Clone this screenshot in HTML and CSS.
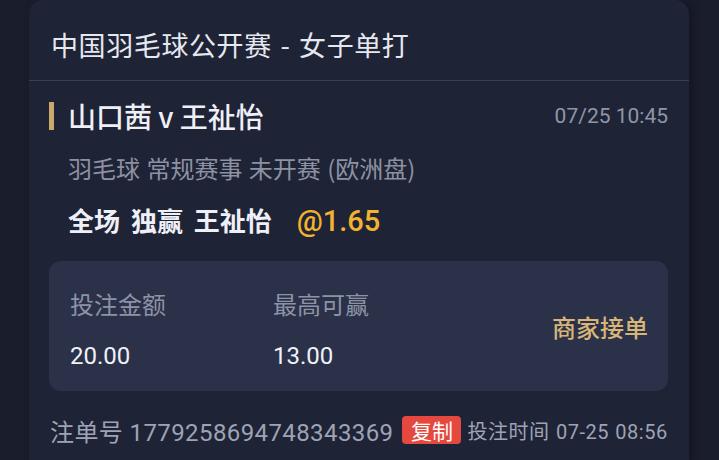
FILE: index.html
```html
<!DOCTYPE html>
<html lang="zh-CN">
<head>
<meta charset="utf-8">
<link rel="stylesheet" href="styles.css">
</head>
<body>
<div class="page">
  <div class="card">
    <div class="card-head">中国羽毛球公开赛 - 女子单打</div>
    <div class="card-body">
      <div class="match-row">
        <div class="match-left">
          <span class="accent"></span>
          <span class="teams">山口茜 v 王祉怡</span>
        </div>
        <span class="time">07/25 10:45</span>
      </div>
      <div class="subtitle">羽毛球 常规赛事 未开赛 (欧洲盘)</div>
      <div class="bet">全场 独赢 王祉怡<span class="odds">@1.65</span></div>
      <div class="stake-box">
        <div class="stake-col">
          <div class="stake-label">投注金额</div>
          <div class="stake-value">20.00</div>
        </div>
        <div class="stake-col">
          <div class="stake-label">最高可赢</div>
          <div class="stake-value">13.00</div>
        </div>
        <div class="merchant">商家接单</div>
      </div>
      <div class="footer">
        <span class="order">注单号 1779258694748343369</span>
        <span class="copy">复制</span>
        <span class="bet-time">投注时间 07-25 08:56</span>
      </div>
    </div>
  </div>
</div>
</body>
</html>
```

FILE: styles.css
```css
* { box-sizing: border-box; }
html, body {
  margin: 0;
  padding: 0;
  background: #1a1d2b;
  width: 719px;
  height: 460px;
  overflow: hidden;
}
body {
  font-family: Roboto, "Noto Sans CJK SC", sans-serif;
}
.page {
  padding-left: 29px;
}
.card {
  width: 660px;
  height: 470px;
  background: #1f2336;
  border-radius: 14px 14px 0 0;
  box-shadow: 4px 0 10px rgba(0, 0, 0, 0.25);
}
.card-head {
  height: 81px;
  padding: 10px 0 0 22px;
  line-height: 70px;
  font-size: 27px;
  color: #e6e8ef;
  letter-spacing: 0.6px;
  word-spacing: 2px;
  border-bottom: 1px solid #3a3f53;
  font-family: "Noto Sans CJK SC", sans-serif;
}
.card-body {
  padding: 0 21px 0 20px;
}
.match-row {
  margin-top: 17px;
  height: 36px;
  display: flex;
  align-items: center;
  justify-content: space-between;
}
.match-left {
  display: flex;
  align-items: center;
}
.accent {
  width: 5px;
  height: 28px;
  background: #c9aa6c;
  margin-right: 14px;
}
.teams {
  font-family: "Noto Sans CJK SC", sans-serif;
  font-size: 28px;
  font-weight: 500;
  color: #eef0f6;
  line-height: 36px;
}
.time {
  font-size: 21px;
  color: #9096a8;
  line-height: 36px;
}
.subtitle {
  margin-top: 18px;
  padding-left: 19px;
  line-height: 32px;
  font-size: 24px;
  word-spacing: 1px;
  color: #8c91a3;
  font-family: "Noto Sans CJK SC", sans-serif;
}
.bet {
  margin-top: 18px;
  padding-left: 19px;
  line-height: 36px;
  font-size: 26px;
  font-weight: 700;
  word-spacing: 5px;
  color: #eef0f6;
  font-family: "Noto Sans CJK SC", sans-serif;
}
.odds {
  margin-left: 25px;
  font-family: Roboto, sans-serif;
  font-size: 29px;
  font-weight: 500;
  word-spacing: 0;
  color: #f2b32e;
}
.stake-box {
  margin-top: 22px;
  height: 130px;
  background: #2b3149;
  border-radius: 12px;
  padding: 28px 20px 0 21px;
  display: flex;
}
.stake-col {
  width: 203px;
}
.stake-label {
  line-height: 30px;
  font-size: 24px;
  color: #8d93a7;
  font-family: "Noto Sans CJK SC", sans-serif;
}
.stake-value {
  margin-top: 22px;
  line-height: 30px;
  font-size: 24px;
  color: #f0f2f8;
}
.merchant {
  margin-left: auto;
  align-self: center;
  margin-top: -28px;
  font-size: 24px;
  color: #d7b677;
  font-family: "Noto Sans CJK SC", sans-serif;
  font-weight: 500;
}
.footer {
  margin-top: 24px;
  padding-left: 1px;
  display: flex;
  align-items: center;
  height: 30px;
  color: #9ea3b5;
  white-space: nowrap;
}
.order {
  font-size: 24px;
  letter-spacing: 0.4px;
  flex-shrink: 0;
}
.copy {
  flex-shrink: 0;
  margin-left: 9px;
  margin-right: 6px;
  width: 59px;
  height: 28px;
  line-height: 28px;
  text-align: center;
  background: #e5483f;
  color: #ffffff;
  border-radius: 4px;
  font-size: 21px;
  font-family: "Noto Sans CJK SC", sans-serif;
}
.bet-time {
  flex-shrink: 0;
  font-size: 20px;
  letter-spacing: 0.5px;
  word-spacing: 1px;
}
```
